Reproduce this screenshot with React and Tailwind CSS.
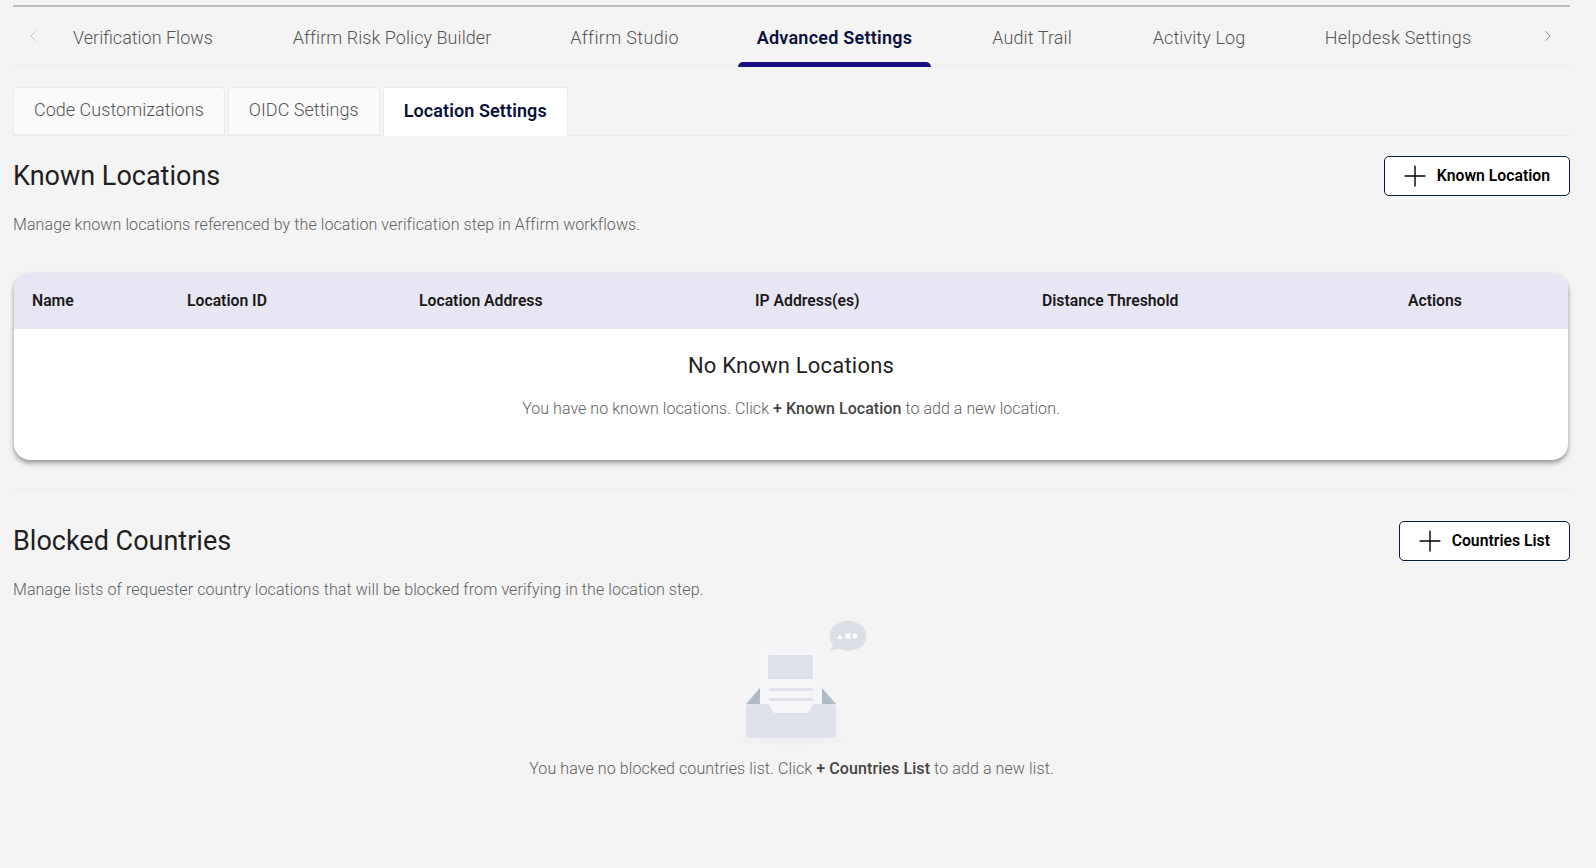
import { Plus, ChevronLeft, ChevronRight } from "lucide-react";

const mainTabs = [
  { label: "Verification Flows", width: "w-[180px]", tracking: "tracking-normal" },
  { label: "Affirm Risk Policy Builder", width: "w-[238px]", tracking: "tracking-[0.05px]" },
  { label: "Affirm Studio", width: "w-[147px]", tracking: "tracking-[0.35px]" },
  { label: "Advanced Settings", width: "w-[193px]", tracking: "tracking-[0.25px]" },
  { label: "Audit Trail", width: "w-[122px]", tracking: "tracking-[0.1px]" },
  { label: "Activity Log", width: "w-[132px]", tracking: "tracking-[0.1px]" },
  { label: "Helpdesk Settings", width: "w-[186px]", tracking: "tracking-[0.25px]" },
];

const subTabs = ["Code Customizations", "OIDC Settings", "Location Settings"];

const columns = ["Name", "Location ID", "Location Address", "IP Address(es)", "Distance Threshold", "Actions"];

const SectionHead = ({ title, button, text }) => (
  <>
    <div className="flex items-center justify-between">
      <h2 className="text-[27px] leading-10 font-normal text-[#1f1f1f]">{title}</h2>
      <button className="flex h-10 items-center gap-[12px] rounded-[5px] border border-[#0a1a3c] bg-white pl-[20px] pr-[19px] text-[15.75px] font-semibold text-black">
        <Plus size={34} strokeWidth={1} className="-m-[7px]" />
        {button}
      </button>
    </div>
    <p className="mt-[17px] text-[16px] leading-6 font-light tracking-[0.09px] text-[#5f5f5f]">{text}</p>
  </>
);

const EmptyTray = () => (
  <svg width="150" height="130" viewBox="1 0 150 130" className="mx-auto">
    <ellipse cx="75" cy="124" rx="56" ry="6" fill="#f1f1f2" />
    <path d="M44 73 L30 89 H44 Z" fill="#b0bac6" />
    <path d="M106 73 L120 89 H106 Z" fill="#b0bac6" />
    <rect x="44" y="32" width="62" height="68" fill="#f6f6f8" />
    <rect x="52" y="40" width="45" height="24" rx="1.5" fill="#dfe2ea" />
    <rect x="53" y="73" width="44" height="3" rx="1.5" fill="#dfe2ea" />
    <rect x="53" y="83" width="44" height="3" rx="1.5" fill="#dfe2ea" />
    <path
      d="M34 89 H50 Q54 89 55 93 Q56 98 60 98 H90 Q94 98 95 93 Q96 89 100 89 H116 Q120 89 120 92 V118 Q120 123 115 123 H35 Q30 123 30 118 V92 Q30 89 34 89 Z"
      fill="#dfe2ea"
    />
    <ellipse cx="132" cy="21" rx="18.5" ry="15" fill="#dcdee5" />
    <path d="M118 28 L114 36 L124 33 Z" fill="#dcdee5" />
    <path d="M124 19 L127 24 H121 Z" fill="#fff" />
    <rect x="129.5" y="18.5" width="5" height="5" fill="#fff" />
    <circle cx="139" cy="21" r="2.5" fill="#fff" />
  </svg>
);

export default function App() {
  return (
    <div className="min-h-screen bg-[#f4f4f4] pl-[13px] pr-[26px] pt-[5px] font-['Roboto',sans-serif]">
      <div className="flex h-[61px] items-center border-t-2 border-b border-t-[#bcbcc2] border-b-[#ebebeb]">
        <div className="flex w-[40px] justify-center text-[#b0b0b0]">
          <ChevronLeft size={18} strokeWidth={1} />
        </div>
        <div className="flex flex-1 gap-10">
          {mainTabs.map((tab) => (
            <div
              key={tab.label}
              className={`relative flex h-[58px] items-center justify-center whitespace-nowrap pt-[3px] text-[18px] ${tab.width} ${tab.tracking} ${
                tab.label === "Advanced Settings" ? "font-semibold text-[#0a0f3c]" : "font-light text-[#555]"
              }`}
            >
              {tab.label}
              {tab.label === "Advanced Settings" && (
                <span className="absolute -bottom-[2px] left-0 h-[5px] w-full rounded-t-[5px] bg-[#1a0f80]" />
              )}
            </div>
          ))}
        </div>
        <div className="flex w-[40px] justify-center pr-[4px] text-[#666]">
          <ChevronRight size={18} strokeWidth={1} />
        </div>
      </div>

      <div className="mt-[21px] flex h-[49px] gap-[3px] border-b border-[#ebebeb]">
        {subTabs.map((tab) => (
          <div
            key={tab}
            className={
              tab === "Location Settings"
                ? "-mb-px flex items-center whitespace-nowrap rounded-t-[4px] border border-b-0 border-[#ebebeb] bg-white px-5 pb-[3px] text-[18px] font-semibold tracking-[0.1px] text-[#0a0f3c]"
                : "flex items-center whitespace-nowrap rounded-t-[4px] border border-[#ebebeb] bg-[#fafafa] px-5 pb-[3px] text-[18px] font-light tracking-[0.03px] text-[#555]"
            }
          >
            {tab}
          </div>
        ))}
      </div>

      <div className="mt-5">
        <SectionHead
          title="Known Locations"
          button="Known Location"
          text="Manage known locations referenced by the location verification step in Affirm workflows."
        />

        <div className="ml-px mr-[2px] mt-[36px] rounded-[16px] bg-white shadow-[0_3px_5px_rgba(0,0,0,0.4)]">
          <div className="grid h-14 grid-cols-[155px_232px_336px_287px_366px_178px] items-center rounded-t-[16px] bg-[#e8e6f3] text-[15.75px] font-semibold text-[#1a1a1a]">
            {columns.map((col) => (
              <div key={col} className="pl-[18px]">{col}</div>
            ))}
          </div>
          <div className="flex h-[131px] flex-col items-center pt-[21px]">
            <h3 className="text-[22px] leading-[32px] font-normal tracking-[0.2px] text-[#1f1f1f]">No Known Locations</h3>
            <p className="mt-[15px] text-[16px] leading-6 font-light tracking-[0.05px] text-[#5f5f5f]">
              You have no known locations. Click <span className="font-medium text-[#444]">+ Known Location</span> to add a new location.
            </p>
          </div>
        </div>
      </div>

      <div className="mt-[29px] border-t border-[#ebebeb] pt-[31px]">
        <SectionHead
          title="Blocked Countries"
          button="Countries List"
          text="Manage lists of requester country locations that will be blocked from verifying in the location step."
        />
        <div className="mt-[13px]">
          <EmptyTray />
          <p className="mt-[12px] text-center text-[16px] leading-6 font-light tracking-[0.1px] text-[#5f5f5f]">
            You have no blocked countries list. Click <span className="font-medium text-[#444]">+ Countries List</span> to add a new list.
          </p>
        </div>
      </div>
    </div>
  );
}
